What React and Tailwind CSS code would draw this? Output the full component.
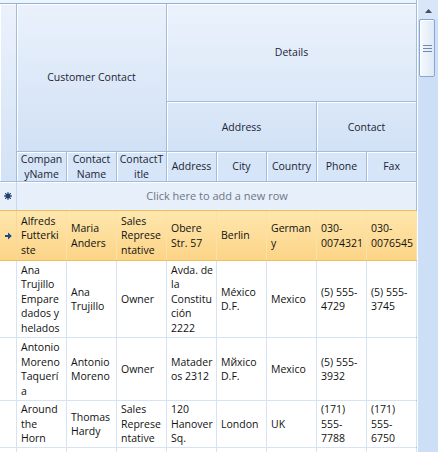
import React from "react";

const FONT = { fontFamily: '"Open Sans", "Noto Sans", sans-serif' };

const hdr =
  "flex items-center justify-center text-center border-r border-b border-[#a3bcdc] shadow-[inset_1px_1px_0_#ffffff] text-[#1d2433]";

function Lines({ lines }) {
  return (
    <div className="leading-[14.5px] whitespace-nowrap">
      {lines.map((l, i) => (
        <div key={i}>{l}</div>
      ))}
    </div>
  );
}

const rows = [
  {
    h: "h-[77px]",
    cells: [
      ["Ana", "Trujillo", "Empare", "dados y", "helados"],
      ["Ana", "Trujillo"],
      ["Owner"],
      ["Avda. de", "la", "Constitu", "ción", "2222"],
      ["México", "D.F."],
      ["Mexico"],
      ["(5) 555-", "4729"],
      ["(5) 555-", "3745"],
    ],
  },
  {
    h: "h-[63px]",
    cells: [
      ["Antonio", "Moreno", "Taquerí", "a"],
      ["Antonio", "Moreno"],
      ["Owner"],
      ["Matader", "os  2312"],
      ["Mйxico", "D.F."],
      ["Mexico"],
      ["(5) 555-", "3932"],
      [],
    ],
  },
  {
    h: "h-[47px]",
    cells: [
      ["Around", "the", "Horn"],
      ["Thomas", "Hardy"],
      ["Sales", "Represe", "ntative"],
      ["120", "Hanover", "Sq."],
      ["London"],
      ["UK"],
      ["(171)", "555-", "7788"],
      ["(171)", "555-", "6750"],
    ],
  },
  { h: "h-[40px]", cells: [[], [], [], [], [], [], [], []] },
];

const selected = [
  ["Alfreds", "Futterki", "ste"],
  ["Maria", "Anders"],
  ["Sales", "Represe", "ntative"],
  ["Obere", "Str. 57"],
  ["Berlin"],
  ["German", "y"],
  ["030-", "0074321"],
  ["030-", "0076545"],
];

export default function App() {
  return (
    <div
      className="w-[438px] h-[452px] overflow-hidden flex bg-white text-[10.5px] text-[#111]"
      style={FONT}
    >
      <div className="w-[417px] flex flex-col shrink-0 border-r border-[#a3bcdc]">
        <div className="h-[3px] bg-[#eef4fc] shrink-0" />
        {/* header */}
        <div className="grid grid-cols-[17px_repeat(8,50px)] grid-rows-[98px_50px_30px] border-t border-[#8fb0da] shrink-0">
          <div className={`${hdr} row-span-3 bg-linear-to-b from-[#ebf2fc] to-[#d3e2f6]`} />
          <div className={`${hdr} col-span-3 row-span-2 bg-linear-to-b from-[#eaf1fc] to-[#d1e1f5]`}>
            Customer Contact
          </div>
          <div className={`${hdr} col-span-5 bg-linear-to-b from-[#ebf2fc] to-[#dbe8f8]`}>Details</div>
          <div className={`${hdr} col-span-3 bg-linear-to-b from-[#dae7f8] to-[#d2e2f6] pt-[3px]`}>Address</div>
          <div className={`${hdr} col-span-2 bg-linear-to-b from-[#dae7f8] to-[#d2e2f6] pt-[3px]`}>Contact</div>
          {[
            ["Compan", "yName"],
            ["Contact", "Name"],
            ["ContactT", "itle"],
            ["Address"],
            ["City"],
            ["Country"],
            ["Phone"],
            ["Fax"],
          ].map((l, i) => (
            <div key={i} className={`${hdr} bg-[#d6e5f7]`}>
              <div className="leading-[14.5px] whitespace-nowrap">
                {l.map((t, j) => (
                  <div key={j}>{t}</div>
                ))}
              </div>
            </div>
          ))}
        </div>
        {/* new row */}
        <div className="grid grid-cols-[17px_400px] h-[28px] bg-[#e7effa] shrink-0 shadow-[inset_0_1px_0_#ffffff]">
          <div className="flex items-center justify-center border-r border-[#c8d9ef]">
            <svg width="8" height="8" viewBox="0 0 8 8" stroke="#1d3e6e" strokeWidth="1.3" strokeLinecap="round">
              <path d="M4 0.7V7.3M0.7 4H7.3M1.6 1.6L6.4 6.4M6.4 1.6L1.6 6.4" />
            </svg>
          </div>
          <div className="flex items-center justify-center text-[#6c7686] text-[11px]">
            Click here to add a new row
          </div>
        </div>
        {/* selected row */}
        <div className="grid grid-cols-[17px_repeat(8,50px)] h-[51px] shrink-0 border-t border-b border-[#f2bd5d] bg-linear-to-b from-[#fee7ae] to-[#fcd486]">
          <div className="flex items-center justify-center border-r border-[#f6d79e]">
            <svg width="7" height="8" viewBox="0 0 7 8" fill="#1f4a86">
              <path d="M0 3h3V0.5L6.8 4 3 7.5V5H0z" />
            </svg>
          </div>
          {selected.map((c, i) => (
            <div key={i} className="flex items-center pl-[4px] border-r border-[#fbe0a8]">
              <Lines lines={c} />
            </div>
          ))}
        </div>
        {rows.map((r, ri) => (
          <div key={ri} className={`grid grid-cols-[17px_repeat(8,50px)] ${r.h} shrink-0 border-b border-[#d5e3f4]`}>
            <div className="border-r border-[#d5e3f4]" />
            {r.cells.map((c, i) => (
              <div key={i} className="flex items-center pl-[4px] border-r border-[#d5e3f4]">
                <Lines lines={c} />
              </div>
            ))}
          </div>
        ))}
      </div>
      {/* scrollbar */}
      <div className="w-[21px] shrink-0 flex flex-col bg-[#cddff6] border-l border-white">
        <div className="h-[19px] flex items-center justify-center bg-[#d9e6f7] pt-[2px]">
          <svg width="7" height="4" viewBox="0 0 7 4" fill="#3d4f6b">
            <path d="M0 4L3.5 0 7 4z" />
          </svg>
        </div>
        <div className="mx-[1px] mr-[3px] h-[58px] rounded-[2px] border border-[#8aa6cc] bg-linear-to-r from-[#f6f9fe] to-[#dde9f8] flex flex-col items-center justify-center gap-[2px] shadow-[inset_1px_1px_0_#ffffff]">
          <div className="w-[9px] h-[1px] bg-[#6f88ad]" />
          <div className="w-[9px] h-[1px] bg-[#6f88ad]" />
          <div className="w-[9px] h-[1px] bg-[#6f88ad]" />
        </div>
        <div className="flex-1 mr-[2px] bg-[#cddff6]" />
      </div>
    </div>
  );
}
